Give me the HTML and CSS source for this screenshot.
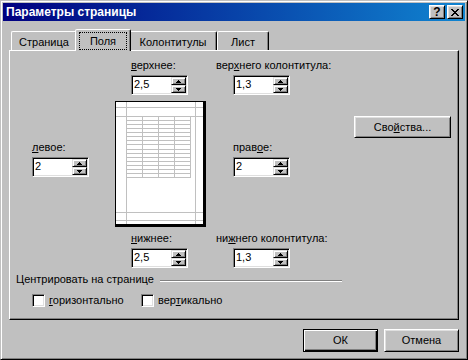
FILE: index.html
```html
<!DOCTYPE html>
<html lang="ru">
<head>
  <meta charset="UTF-8">
  <meta name="viewport" content="width=device-width, initial-scale=1.0">
  <title>Параметры страницы</title>
  <link rel="stylesheet" href="styles.css">
</head>
<body>
  <div class="window">
    <div class="titlebar">
      <span class="title">Параметры страницы</span>
      <div class="caption-btns">
        <span class="cap-btn">?</span>
        <span class="cap-btn">
          <svg width="8" height="7" viewBox="0 0 8 7" shape-rendering="crispEdges"><path d="M0 0h2v1H0zM6 0h2v1H6zM1 1h2v1H1zM5 1h2v1H5zM2 2h4v1H2zM3 3h2v1H3zM2 4h4v1H2zM1 5h2v1H1zM5 5h2v1H5zM0 6h2v1H0zM6 6h2v1H6z"/></svg>
        </span>
      </div>
    </div>

    <div class="dialog">
      <div class="tabs">
        <div class="tab tab-page">Страница</div>
        <div class="tab tab-margins tab-active"><span class="focus">Поля</span></div>
        <div class="tab tab-headers">Колонтитулы</div>
        <div class="tab tab-sheet">Лист</div>
      </div>

      <div class="panel">
        <div class="margins">
          <div class="field field-top">
            <label><u>в</u>ерхнее:</label>
            <div class="spin"><span class="spin-value">2,5</span><span class="spin-btns"><span class="spin-btn spin-up"></span><span class="spin-btn spin-down"></span></span></div>
          </div>
          <div class="field field-header">
            <label>вер<u>х</u>него колонтитула:</label>
            <div class="spin"><span class="spin-value">1,3</span><span class="spin-btns"><span class="spin-btn spin-up"></span><span class="spin-btn spin-down"></span></span></div>
          </div>

          <div class="field field-left">
            <label><u>л</u>евое:</label>
            <div class="spin"><span class="spin-value">2</span><span class="spin-btns"><span class="spin-btn spin-up"></span><span class="spin-btn spin-down"></span></span></div>
          </div>
          <div class="preview">
            <svg width="87" height="122" viewBox="0 0 87 122" shape-rendering="crispEdges">
              <path stroke="#c0c0c0" fill="none" d="M10.5 0V122M79.5 0V122M0 5.5H87M0 14.5H87M0 110.5H87M0 118.5H87
                M26.5 14V76M42.5 14V76M58.5 14V76M74.5 14V76
                M10 18.5H75M10 22.5H75M10 26.5H75M10 30.5H75M10 34.5H75M10 38.5H75M10 42.5H75M10 47.5H75
                M10 51.5H75M10 55.5H75M10 59.5H75M10 63.5H75M10 67.5H75M10 71.5H75M10 75.5H75"/>
            </svg>
          </div>
          <div class="field field-right">
            <label>прав<u>о</u>е:</label>
            <div class="spin"><span class="spin-value">2</span><span class="spin-btns"><span class="spin-btn spin-up"></span><span class="spin-btn spin-down"></span></span></div>
          </div>
          <button class="btn btn-props">Сво<u>й</u>ства...</button>

          <div class="field field-bottom">
            <label><u>н</u>ижнее:</label>
            <div class="spin"><span class="spin-value">2,5</span><span class="spin-btns"><span class="spin-btn spin-up"></span><span class="spin-btn spin-down"></span></span></div>
          </div>
          <div class="field field-footer">
            <label>ни<u>ж</u>него колонтитула:</label>
            <div class="spin"><span class="spin-value">1,3</span><span class="spin-btns"><span class="spin-btn spin-up"></span><span class="spin-btn spin-down"></span></span></div>
          </div>
        </div>

        <div class="group">
          <div class="group-title"><span>Центрировать на странице</span><span class="etch"></span></div>
          <div class="checks">
            <div class="check check-horiz"><span class="check-box"></span><span><u>г</u>оризонтально</span></div>
            <div class="check"><span class="check-box"></span><span>вер<u>т</u>икально</span></div>
          </div>
        </div>
      </div>

      <div class="actions">
        <button class="btn btn-default">ОК</button>
        <button class="btn">Отмена</button>
      </div>
    </div>
  </div>
</body>
</html>
```

FILE: styles.css
```css
* {
  box-sizing: border-box;
}
body {
  margin: 0;
  font-family: "Liberation Sans", Arial, sans-serif;
  font-size: 11px;
  color: #000;
  background: #c0c0c0;
}
u {
  text-decoration-thickness: 1px;
}

/* window frame */
.window {
  width: 468px;
  height: 360px;
  padding: 2px;
  background: #c0c0c0;
  border: 1px solid;
  border-color: #c0c0c0 #000 #000 #c0c0c0;
  box-shadow: inset 1px 1px #fff, inset -1px -1px #808080;
}
.titlebar {
  height: 18px;
  display: flex;
  align-items: center;
  justify-content: space-between;
  padding: 0 2px 0 3px;
  background: linear-gradient(to right, #000080, #1084d0);
  color: #fff;
}
.title {
  font-size: 12px;
  font-weight: bold;
  line-height: 18px;
}
.caption-btns {
  display: flex;
  gap: 2px;
}
.cap-btn {
  width: 16px;
  height: 14px;
  display: flex;
  align-items: center;
  justify-content: center;
  background: #c0c0c0;
  color: #000;
  font-size: 12px;
  font-weight: bold;
  line-height: 12px;
  border: 1px solid;
  border-color: #fff #000 #000 #fff;
  box-shadow: inset 1px 1px #dfdfdf, inset -1px -1px #808080;
}

/* tabs */
.dialog {
  padding: 8px 6px 0;
}
.tabs {
  display: flex;
  align-items: flex-end;
  height: 21px;
  padding-left: 2px;
}
.tab {
  height: 19px;
  padding-top: 4px;
  text-align: center;
  line-height: 13px;
  border: 1px solid;
  border-bottom: 0;
  border-color: #fff #000 transparent #fff;
  border-radius: 2px 2px 0 0;
  box-shadow: inset -1px 0 #808080;
}
.tab-page { width: 66px; }
.tab-margins { width: 52px; }
.tab-headers { width: 88px; }
.tab-sheet { width: 52px; }
.tab-active {
  position: relative;
  z-index: 1;
  width: 56px;
  height: 22px;
  margin: 0 -2px -1px;
  padding: 1px 2px 0;
  background: #c0c0c0;
}
.focus {
  display: block;
  height: 18px;
  margin: 1px 1px 0;
  padding-top: 2px;
  border: 1px dotted #000;
}

.panel {
  height: 270px;
  border: 1px solid;
  border-color: #fff #000 #000 #fff;
  box-shadow: inset -1px -1px #808080;
}

/* margins layout */
.margins {
  display: grid;
  grid-template-columns: 105px 101px 138px 97px;
  grid-template-rows: 50px 126px 42px;
}
.field {
  display: flex;
  flex-direction: column;
  align-items: flex-start;
  gap: 3px;
  line-height: 13px;
}
.field-top { grid-area: 1 / 2; margin: 8px 0 0 16px; }
.field-header { grid-area: 1 / 3; margin-top: 8px; }
.field-left { grid-area: 2 / 1; margin: 40px 0 0 22px; }
.field-right { grid-area: 2 / 3; margin: 40px 0 0 17px; }
.field-bottom { grid-area: 3 / 2; margin: 5px 0 0 16px; }
.field-footer { grid-area: 3 / 3; margin-top: 5px; }
.field-header .spin,
.field-footer .spin {
  margin-left: 17px;
}

.spin {
  display: flex;
  width: 57px;
  height: 20px;
  padding: 1px;
  background: #fff;
  border: 1px solid;
  border-color: #808080 #fff #fff #808080;
  box-shadow: inset 1px 1px #000, inset -1px -1px #dfdfdf;
}
.spin-value {
  flex: 1;
  padding: 1px 0 0 1px;
  line-height: 13px;
}
.spin-btns {
  display: flex;
  flex-direction: column;
  width: 15px;
}
.spin-btn {
  flex: 1;
  display: flex;
  align-items: center;
  justify-content: center;
  background: #c0c0c0;
  border: 1px solid;
  border-color: #dfdfdf #000 #000 #dfdfdf;
  box-shadow: inset 1px 1px #fff, inset -1px -1px #808080;
}
.spin-btn::before {
  content: "";
  width: 1px;
  height: 1px;
  background: #000;
}
.spin-up::before {
  margin-bottom: 2px;
  box-shadow: -1px 1px #000, 0 1px #000, 1px 1px #000,
    -2px 2px #000, -1px 2px #000, 0 2px #000, 1px 2px #000, 2px 2px #000;
}
.spin-down::before {
  margin-top: 2px;
  box-shadow: -1px -1px #000, 0 -1px #000, 1px -1px #000,
    -2px -2px #000, -1px -2px #000, 0 -2px #000, 1px -2px #000, 2px -2px #000;
}

.preview {
  grid-area: 2 / 2;
  width: 91px;
  height: 126px;
  background: #fff;
  border: solid #000;
  border-width: 1px 3px 3px 1px;
}
.preview svg {
  display: block;
}

/* buttons */
.btn {
  width: 75px;
  height: 23px;
  padding: 0;
  font: inherit;
  line-height: 13px;
  color: #000;
  background: #c0c0c0;
  border: 1px solid;
  border-color: #fff #000 #000 #fff;
  box-shadow: inset 1px 1px #dfdfdf, inset -1px -1px #808080;
}
.btn-default {
  border-color: #000;
  box-shadow: inset 1px 1px #fff, inset -1px -1px #000, inset -2px -2px #808080;
}
.btn-props {
  grid-area: 2 / 4;
  width: 97px;
  height: 22px;
  margin-top: 15px;
}

/* centering group */
.group {
  padding: 4px 0 0 6px;
}
.group-title {
  display: flex;
  align-items: flex-start;
  gap: 6px;
  line-height: 13px;
}
.etch {
  width: 182px;
  height: 2px;
  margin-top: 7px;
  border-top: 1px solid #808080;
  border-bottom: 1px solid #fff;
}
.checks {
  display: flex;
  margin: 8px 0 0 16px;
}
.check {
  display: flex;
  align-items: center;
  gap: 4px;
  line-height: 13px;
}
.check-horiz {
  width: 109px;
}
.check-box {
  width: 13px;
  height: 13px;
  background: #fff;
  border: 1px solid;
  border-color: #808080 #fff #fff #808080;
  box-shadow: inset 1px 1px #000, inset -1px -1px #dfdfdf;
}

.actions {
  display: flex;
  justify-content: flex-end;
  gap: 6px;
  margin-top: 9px;
}
```
